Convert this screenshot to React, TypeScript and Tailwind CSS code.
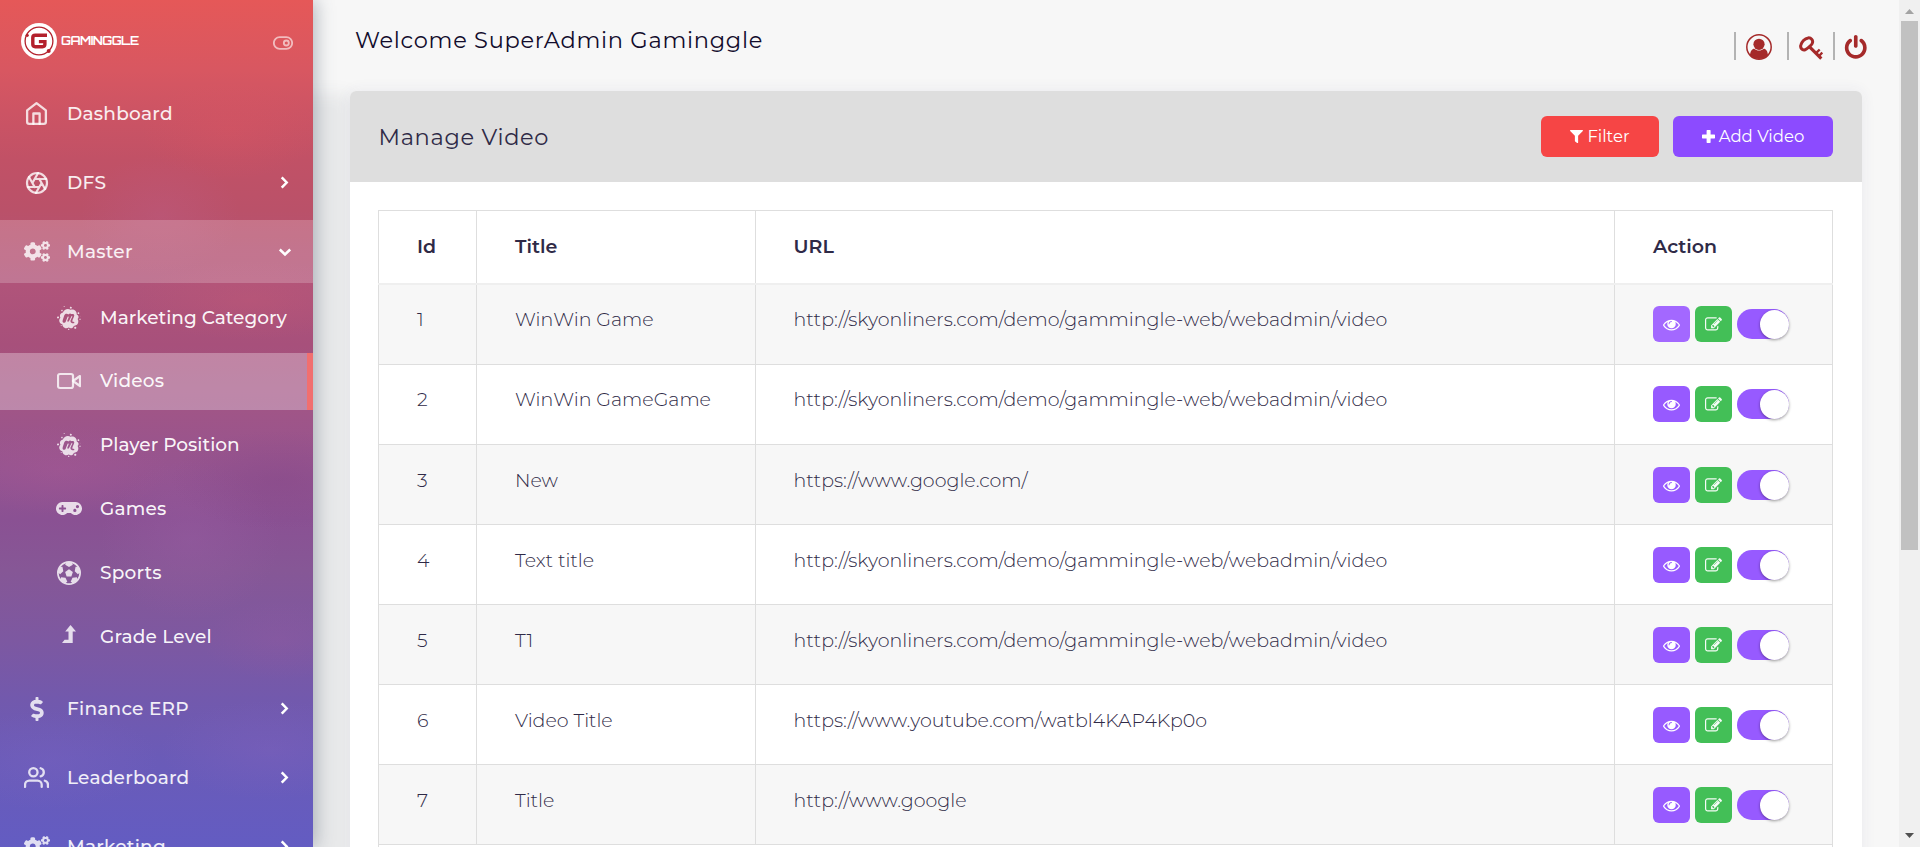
import React from 'react';
import { FaCogs, FaDollarSign, FaFilter, FaGamepad, FaMeetup } from 'react-icons/fa';

type StrokeProps = { className?: string; children: React.ReactNode };

function Stroke({ className, children }: StrokeProps) {
  return (
    <svg
      viewBox="0 0 24 24"
      fill="none"
      stroke="currentColor"
      strokeWidth="2.200"
      strokeLinecap="round"
      strokeLinejoin="round"
      className={className}
    >
      {children}
    </svg>
  );
}

const HomeIcon = () => (
  <Stroke className="size-[25px]">
    <path d="M3 9l9-7 9 7v11a2 2 0 0 1-2 2H5a2 2 0 0 1-2-2z" />
    <path d="M9 22V12h6v10" />
  </Stroke>
);

const ApertureIcon = () => (
  <Stroke className="size-6">
    <circle cx="12" cy="12" r="10" />
    <path d="M14.31 8l5.74 9.94M9.69 8h11.48M7.38 12l5.74-9.94M9.69 16L3.95 6.06M14.31 16H2.83M16.62 12l-5.74 9.94" />
  </Stroke>
);

const VideoIcon = () => (
  <Stroke className="size-6">
    <path d="M23 7l-7 5 7 5z" />
    <rect x="1" y="5" width="15" height="14" rx="2" />
  </Stroke>
);

const UsersIcon = () => (
  <Stroke className="size-[25px]">
    <path d="M17 21v-2a4 4 0 0 0-4-4H5a4 4 0 0 0-4 4v2" />
    <circle cx="9" cy="7" r="4" />
    <path d="M23 21v-2a4 4 0 0 0-3-3.870M16 3.130a4 4 0 0 1 0 7.750" />
  </Stroke>
);

const ToggleIcon = () => (
  <Stroke className="size-5">
    <rect x="1" y="5" width="22" height="14" rx="7" />
    <circle cx="16" cy="12" r="3" />
  </Stroke>
);

const FootballIcon = () => (
  <svg viewBox="0 0 1792 1792" fill="currentColor" fillRule="evenodd" className="size-6">
    <path d="M609 816l287-208 287 208-109 336h-355zM896 0q182 0 348 71t286 191 191 286 71 348-71 348-191 286-286 191-348 71-348-71-286-191-191-286-71-348 71-348 191-286 286-191 348-71zM1515 1350q149-203 149-454v-3l-102 89-240-224 63-323 134 12q-150-206-389-282l53 124-287 159-287-159 53-124q-239 76-389 282l135-12 62 323-240 224-102-89v3q0 251 149 454l30-132 326 40 139 298-116 69q117 39 240 39t240-39l-116-69 139-298 326-40z" />
  </svg>
);

const LevelUpIcon = () => (
  <svg viewBox="0 0 14 18" fill="currentColor" className="-mt-1 h-[18px] w-3.5">
    <path d="M8.500 0L14 6.600h-3.300V18H0l2.600-3.300H6.500V6.600H3.200z" />
  </svg>
);

const PlusIcon = () => (
  <svg viewBox="0 0 13 13" fill="currentColor" className="size-[13px]">
    <path d="M5.200 0h2.800q.6 0 .6.600v3.900h3.800q.6 0 .6.600v2.700q0 .6-.6.600H8.600v3.900q0 .6-.6.600H5.200q-.6 0-.6-.6V8.400H.6Q0 8.400 0 7.800V5.100q0-.6.600-.6h4V.6q0-.6.600-.6z" />
  </svg>
);

const PowerIcon = () => (
  <svg viewBox="0 0 1792 1792" fill="currentColor" className="size-[25.500px]">
    <path d="M1664 896q0 156-61 298t-164 245-245 164-298 61-298-61-245-164-164-245-61-298q0-182 80.500-343t226.500-270q43-32 95.500-25t83.500 50q32 42 24.500 94.500t-49.500 84.500q-98 74-151.500 181t-53.500 228q0 104 40.500 198.500t109.500 163.500 163.500 109.500 198.500 40.500 198.500-40.500 163.500-109.500 109.500-163.500 40.500-198.500q0-121-53.500-228t-151.500-181q-42-32-49.500-84.500t24.500-94.500q31-43 84-50t95 25q146 109 226.500 270t80.500 343zM1024 128v640q0 52-38 90t-90 38-90-38-38-90v-640q0-52 38-90t90-38 90 38 38 90z" />
  </svg>
);

const EyeIcon = () => (
  <svg viewBox="0 0 1792 1792" fill="currentColor" className="size-[17px]">
    <path d="M1664 960q-152-236-381-353 61 104 61 225 0 185-131.500 316.500t-316.500 131.500-316.500-131.500-131.500-316.500q0-121 61-225-229 117-381 353 133 205 333.500 326.500t434.500 121.500 434.500-121.500 333.500-326.500zM944 576q0-20-14-34t-34-14q-125 0-214.500 89.500t-89.500 214.500q0 20 14 34t34 14 34-14 14-34q0-86 61-147t147-61q20 0 34-14t14-34zM1792 960q0 34-20 69-140 230-376.500 368.500t-499.500 138.500-499.500-139-376.500-368q-20-35-20-69t20-69q140-229 376.500-368t499.500-139 499.500 139 376.500 368q20 35 20 69z" />
  </svg>
);

const EditIcon = () => (
  <svg viewBox="0 0 1792 1792" fill="currentColor" className="size-[17px]">
    <path d="M888 1184l116-116-152-152-116 116v56h96v96h56zM1328 464q-16-16-33 1l-350 350q-17 17-1 33t33-1l350-350q17-17 1-33zM1408 1058v190q0 119-84.500 203.500t-203.500 84.500h-832q-119 0-203.500-84.500t-84.500-203.500v-832q0-119 84.500-203.500t203.500-84.500h832q63 0 117 25 15 7 18 23 3 17-9 29l-49 49q-14 14-32 8-23-6-45-6h-832q-66 0-113 47t-47 113v832q0 66 47 113t113 47h832q66 0 113-47t47-113v-126q0-13 9-22l64-64q15-15 35-7t20 29zM1312 320l288 288-672 672h-288v-288zM1756 452l-92 92-288-288 92-92q28-28 68-28t68 28l152 152q28 28 28 68t-28 68z" />
  </svg>
);

const KeyIcon = () => (
  <svg viewBox="0 0 24 24" fill="none" stroke="currentColor" className="size-6">
    <path strokeWidth="3" d="M6.200 13.700C3 14.600 1.100 11.800 1.800 9.200 2.600 5.800 5.600 2.300 9.200 1.900c2.900-.3 5 2 4.300 4.800-.3 1.500-1.400 2.500-2.500 3.400-1.500 1.200-2.700 3-4.800 3.600z" />
    <path strokeWidth="3.200" d="M10.300 10.600l12 12" />
    <path strokeWidth="2.400" d="M17 17.200l3.700-3.700M20 20l3.300-3.400" />
  </svg>
);

const UserCircleIcon = () => (
  <svg viewBox="0 0 26 26" className="size-[26px]">
    <defs>
      <clipPath id="avatar">
        <circle cx="13" cy="13" r="12" />
      </clipPath>
    </defs>
    <circle cx="13" cy="13" r="12.200" fill="none" stroke="currentColor" strokeWidth="1.500" />
    <g clipPath="url(#avatar)" fill="currentColor">
      <path d="M4 21c.4-4 2-6.300 4.300-6.300 1.300 1.100 2.900 1.800 4.700 1.800s3.400-.7 4.700-1.800C20 14.700 21.600 17 22 21v5H4z" />
    </g>
    <circle cx="13" cy="10.300" r="5.600" fill="currentColor" />
  </svg>
);

const Logo = () => (
  <div className="flex items-center gap-1">
    <svg viewBox="0 0 36 36" className="size-9">
      <circle cx="18" cy="18" r="18" fill="#fff" />
      <circle cx="18" cy="18" r="13.900" fill="none" stroke="#b3202c" strokeWidth="1.300" />
      <circle cx="6.200" cy="12.300" r="1.600" fill="#b3202c" />
      <circle cx="27.700" cy="28" r="2" fill="#b3202c" />
      <path d="M26 12.300H14.200q-2.400 0-2.400 2.400v6.600q0 2.400 2.400 2.400h7.300q2.400 0 2.400-2.400v-2.700h-6" fill="none" stroke="#b3202c" strokeWidth="3.400" />
    </svg>
    <span className="font-['Orbitron','Montserrat',sans-serif] text-[12px] leading-3 font-bold tracking-[-0.5px] text-white">
      GAMINGGLE
    </span>
  </div>
);

const Chevron = ({ open }: { open?: boolean }) => (
  <svg viewBox="0 0 20 20" fill="none" stroke="currentColor" strokeWidth="2.500" className="size-5 text-white">
    {open ? <path d="M4.800 7.500l5.200 5 5.200-5" /> : <path d="M6.700 4.300l5 5.200-5 5.200" />}
  </svg>
);

type Item = { label: string; icon: React.ReactNode; arrow?: boolean; open?: boolean };

function MainItem({ label, icon, arrow, open }: Item) {
  return (
    <li className={open ? 'flex h-[63px] items-center bg-white/20 pr-[18px]' : 'flex h-[63px] items-center pr-[18px]'}>
      <span className="flex w-[73px] justify-center text-white/80">{icon}</span>
      <span className="-ml-1.5 flex-1 text-[18.5px] font-medium tracking-[0.25px] text-white/90">{label}</span>
      {arrow && <Chevron open={open} />}
    </li>
  );
}

type Sub = { label: string; icon: React.ReactNode; tight?: boolean; active?: boolean };

const subItems: Sub[] = [
  { label: 'Marketing Category', icon: <FaMeetup className="size-6" />, tight: true },
  { label: 'Videos', icon: <VideoIcon />, active: true },
  { label: 'Player Position', icon: <FaMeetup className="size-6" />, tight: true },
  { label: 'Games', icon: <FaGamepad className="h-[21px] w-[26px]" /> },
  { label: 'Sports', icon: <FootballIcon /> },
  { label: 'Grade Level', icon: <LevelUpIcon /> },
];

function Sidebar() {
  return (
    <aside className="h-full w-[313px] shrink-0 overflow-hidden bg-[radial-gradient(90px_50px_at_230px_130px,rgba(225,85,95,0.25),transparent),radial-gradient(80px_60px_at_160px_215px,rgba(190,95,140,0.3),transparent),radial-gradient(120px_40px_at_250px_300px,rgba(200,90,115,0.3),transparent),radial-gradient(110px_45px_at_60px_470px,rgba(175,90,150,0.3),transparent),radial-gradient(110px_50px_at_280px_480px,rgba(125,65,130,0.3),transparent),radial-gradient(90px_80px_at_190px_540px,rgba(155,95,165,0.35),transparent),radial-gradient(80px_40px_at_280px_640px,rgba(150,90,160,0.3),transparent),radial-gradient(110px_50px_at_50px_760px,rgba(125,100,195,0.3),transparent),radial-gradient(110px_50px_at_270px_750px,rgba(135,100,190,0.3),transparent),linear-gradient(to_bottom,#e55858_0px,#d85761_70px,#cd5464_110px,#c15166_160px,#ba5169_210px,#b0547a_285px,#a7507b_345px,#a05587_410px,#955490_470px,#8a5193_520px,#865796_570px,#7d58a1_640px,#7259ad_700px,#6a5bb8_760px,#635cc2_847px)] shadow-[3px_0_17px_rgba(60,75,95,0.36),20px_112px_16px_18px_rgba(60,75,95,0.08)]">
      <div className="flex h-[82px] items-center justify-between pr-5 pl-[21px]">
        <Logo />
        <span className="mt-1 text-white/60">
          <ToggleIcon />
        </span>
      </div>
      <ul className="flex flex-col gap-1.5">
        <MainItem label="Dashboard" icon={<HomeIcon />} />
        <MainItem label="DFS" icon={<ApertureIcon />} arrow />
        <MainItem label="Master" icon={<FaCogs className="h-[23px] w-[26px]" />} arrow open />
        <li>
          <ul className="flex h-[382px] flex-col justify-between pb-1.5">
            {subItems.map((s) => (
              <li
                key={s.label}
                className={
                  s.active
                    ? 'flex h-[57px] items-center border-r-[6px] border-[#f16f6f] bg-white/30'
                    : 'flex h-[57px] items-center'
                }
              >
                <span className="flex w-[100px] justify-center pl-[38px] text-white/80">{s.icon}</span>
                <span
                  className={
                    s.tight
                      ? 'text-[18.5px] font-medium text-white/95'
                      : 'text-[18.5px] font-medium tracking-[0.2px] text-white/95'
                  }
                >
                  {s.label}
                </span>
              </li>
            ))}
          </ul>
        </li>
        <MainItem label="Finance ERP" icon={<FaDollarSign className="size-6" />} arrow />
        <MainItem label="Leaderboard" icon={<UsersIcon />} arrow />
        <MainItem label="Marketing" icon={<FaCogs className="h-[23px] w-[26px]" />} arrow />
      </ul>
    </aside>
  );
}

const demoUrl = 'http://skyonliners.com/demo/gammingle-web/webadmin/video';

const rows = [
  { id: 1, title: 'WinWin Game', url: demoUrl },
  { id: 2, title: 'WinWin GameGame', url: demoUrl },
  { id: 3, title: 'New', url: 'https://www.google.com/' },
  { id: 4, title: 'Text title', url: demoUrl },
  { id: 5, title: 'T1', url: demoUrl },
  { id: 6, title: 'Video Title', url: 'https://www.youtube.com/watbl4KAP4Kp0o' },
  { id: 7, title: 'Title', url: 'http://www.google' },
];

function Actions({ first }: { first: boolean }) {
  return (
    <div className="flex h-full items-start gap-[5px] border-r border-[#dedede] pl-[38px]">
      <button
        className={
          first
            ? 'flex h-9 w-[37px] items-center justify-center rounded-md bg-[#a368ff] text-white'
            : 'flex h-9 w-[37px] items-center justify-center rounded-md bg-[#975aff] text-white'
        }
      >
        <EyeIcon />
      </button>
      <button className="flex h-9 w-[37px] items-center justify-center rounded-md bg-[#43bf57] text-white/95">
        <EditIcon />
      </button>
      <span className="mt-[3px] flex h-[30px] w-[52px] items-center justify-end rounded-full bg-[#975aff]">
        <span className="size-[29px] rounded-full bg-white shadow-[0_1px_3px_rgba(0,0,0,0.4)]" />
      </span>
    </div>
  );
}

export default function App() {
  return (
    <div className="flex h-screen w-full overflow-hidden bg-[#f7f7f7] font-['Montserrat','Open_Sans',sans-serif] text-[#2f2a47]">
      <Sidebar />
      <main className="min-w-0 flex-1 pr-[37px] pl-[37px]">
        <header className="flex h-[91px] items-start justify-between">
          <h1 className="pt-[25px] pl-[5px] text-[22.5px] leading-[30px] tracking-[0.72px] text-[#120c2c]">
            Welcome SuperAdmin Gaminggle
          </h1>
          <div className="mt-8 -mr-1.5 flex h-7 items-center text-[#a52a2a]">
            <span className="h-7 w-0.5 bg-[#b3b3b3]" />
            <span className="mt-0.5 ml-2.5">
              <UserCircleIcon />
            </span>
            <span className="ml-[15px] h-7 w-0.5 bg-[#b3b3b3]" />
            <span className="mt-[3px] ml-[10px]">
              <KeyIcon />
            </span>
            <span className="ml-[10px] h-7 w-0.5 bg-[#b3b3b3]" />
            <span className="ml-2 mt-1">
              <PowerIcon />
            </span>
          </div>
        </header>

        <section className="h-[800px] overflow-hidden rounded-md bg-white shadow-[0_0_15px_rgba(62,57,107,0.07)]">
          <div className="flex h-[91px] items-center justify-between bg-[#dedede] pr-[29px] pl-[28.500px]">
            <h2 className="text-[22.5px] leading-[30px] tracking-[0.68px]">Manage Video</h2>
            <div className="flex gap-3.5">
              <button className="flex h-[41px] w-[118px] items-center justify-center gap-1 rounded-md bg-[#f64545] text-[16.5px] text-white">
                <FaFilter className="size-[13px]" />
                Filter
              </button>
              <button className="flex h-[41px] w-40 items-center justify-center gap-1 rounded-md bg-[#8c4bff] text-[16.5px] text-white">
                <PlusIcon />
                Add Video
              </button>
            </div>
          </div>

          <div className="mt-7 mr-[29px] ml-7 text-[19px] leading-7">
            <div className="grid h-[75px] grid-cols-[99px_279px_859px_218px] border-t border-b-2 border-t-[#dedede] border-b-[#efefef] font-semibold">
              <div className="flex items-center border-x border-[#dedede] pl-[38px]">Id</div>
              <div className="flex items-center border-r border-[#dedede] pl-[38px]">Title</div>
              <div className="flex items-center border-r border-[#dedede] pl-[37.5px]">URL</div>
              <div className="flex items-center border-r border-[#dedede] pl-[38px]">Action</div>
            </div>
            {rows.map((r) => (
              <div
                key={r.id}
                className="grid h-20 grid-cols-[99px_279px_859px_218px] border-b border-[#dedede] font-light odd:bg-white even:bg-[#f7f7f7]"
              >
                <div className={r.id < 3 ? 'border-x border-[#dedede] pt-[21px] pl-[38px]' : 'border-x border-[#dedede] pt-[22px] pl-[38px]'}>
                  {r.id}
                </div>
                <div className={r.id < 3 ? 'border-r border-[#dedede] pt-[21px] pl-[38px]' : 'border-r border-[#dedede] pt-[22px] pl-[38px]'}>
                  {r.title}
                </div>
                <div className={r.id < 3 ? 'border-r border-[#dedede] pt-[21px] pl-[37.5px]' : 'border-r border-[#dedede] pt-[22px] pl-[37.5px]'}>
                  {r.url}
                </div>
                <div className="flex flex-col">
                  <div className={r.id < 3 ? 'h-[21px] border-r border-[#dedede]' : 'h-[22px] border-r border-[#dedede]'} />
                  <div className="min-h-0 flex-1">
                    <Actions first={r.id === 1} />
                  </div>
                </div>
              </div>
            ))}
            <div className="h-20 border-x border-[#dedede]" />
          </div>
        </section>
      </main>

      <div className="flex w-[21px] shrink-0 flex-col items-center bg-[#f0f0f0]">
        <svg viewBox="0 0 21 21" className="h-[21px] w-[21px] shrink-0">
          <path d="M6 14l4.500-5 4.500 5z" fill="#a3a3a3" />
        </svg>
        <div className="h-[529px] w-[17px] bg-[#c1c1c1]" />
        <svg viewBox="0 0 21 21" className="mt-auto h-[21px] w-[21px] shrink-0">
          <path d="M6 7l4.500 5 4.500-5z" fill="#505050" />
        </svg>
      </div>
    </div>
  );
}
